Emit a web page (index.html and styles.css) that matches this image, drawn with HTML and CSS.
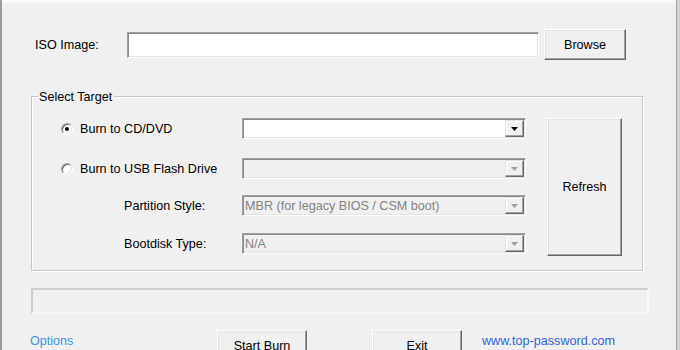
FILE: index.html
```html
<!DOCTYPE html>
<html>
<head>
<meta charset="utf-8">
<link rel="stylesheet" href="styles.css">
</head>
<body>
<div class="window">
  <div class="top-strip"></div>
  <div class="iso-row">
    <span class="iso-label">ISO Image:</span>
    <div class="textbox"></div>
    <button class="btn browse">Browse</button>
  </div>

  <div class="group">
    <span class="group-title">Select Target</span>
    <div class="group-grid">
      <label class="radio-row r1"><span class="radio checked"></span><span>Burn to CD/DVD</span></label>
      <div class="combo c1"><span class="combo-text"></span><span class="combo-btn"><svg width="7" height="4" viewBox="0 0 7 4"><polygon points="0,0 7,0 3.5,4" fill="#000"/></svg></span></div>
      <button class="btn refresh">Refresh</button>

      <label class="radio-row r2"><span class="radio"></span><span>Burn to USB Flash Drive</span></label>
      <div class="combo disabled c2"><span class="combo-text"></span><span class="combo-btn"><svg width="7" height="4" viewBox="0 0 7 4"><polygon points="0,0 7,0 3.5,4" fill="#a0a0a0"/></svg></span></div>

      <span class="sub-label r3">Partition Style:</span>
      <div class="combo disabled c3"><span class="combo-text">MBR (for legacy BIOS / CSM boot)</span><span class="combo-btn"><svg width="7" height="4" viewBox="0 0 7 4"><polygon points="0,0 7,0 3.5,4" fill="#a0a0a0"/></svg></span></div>

      <span class="sub-label r4">Bootdisk Type:</span>
      <div class="combo disabled c4"><span class="combo-text">N/A</span><span class="combo-btn"><svg width="7" height="4" viewBox="0 0 7 4"><polygon points="0,0 7,0 3.5,4" fill="#a0a0a0"/></svg></span></div>
    </div>
  </div>

  <div class="progress"></div>

  <div class="bottom-row">
    <a class="link options">Options</a>
    <button class="btn action start">Start Burn</button>
    <button class="btn action exit">Exit</button>
    <a class="link site">www.top-password.com</a>
  </div>
</div>
</body>
</html>
```

FILE: styles.css
```css
* { box-sizing: border-box; }
html, body {
  margin: 0;
  padding: 0;
  background: #d2d2d2;
  width: 680px;
  height: 350px;
  overflow: hidden;
}
.window {
  width: 677px;
  height: 350px;
  background: #f0f0f0;
  border-left: 2px solid #9c9c9c;
  border-right: 1px solid #a0a0a0;
  font-family: "Liberation Sans", Arial, sans-serif;
  font-size: 12.6px;
  color: #000;
}
.top-strip {
  height: 3px;
  background: #fafafa;
}

.btn {
  font-family: inherit;
  font-size: inherit;
  color: #000;
  background: #f0f0f0;
  border: 1px solid;
  border-color: #ffffff #696969 #696969 #ffffff;
  box-shadow: inset -1px -1px 0 #a0a0a0, inset 1px 1px 0 #e3e3e3;
  padding: 0;
  margin: 0;
}

/* ISO row */
.iso-row {
  display: flex;
  align-items: center;
  margin-top: 26px;
  margin-left: 33px;
  height: 31px;
}
.iso-label {
  width: 92px;
}
.textbox {
  width: 412px;
  height: 26px;
  margin-top: 1px;
  background: #fff;
  border: 1px solid;
  border-color: #a0a0a0 #ffffff #ffffff #a0a0a0;
  box-shadow: inset 1px 1px 0 #8a8a8a, inset -1px -1px 0 #e3e3e3;
  margin-right: 5px;
}
.browse {
  width: 82px;
  height: 31px;
}

/* Group box */
.group {
  position: relative;
  margin-top: 36px;
  margin-left: 29px;
  width: 612px;
  border: 1px solid #c6c6c6;
  box-shadow: inset 1px 1px 0 #ffffff, 1px 1px 0 #ffffff;
  padding: 21px 0 14px 0;
}
.group-title {
  position: absolute;
  left: 6px;
  top: -8px;
  padding: 0 2px 0 1px;
  background: #f0f0f0;
  line-height: 16px;
}
.group-grid {
  display: grid;
  grid-template-columns: 210px 284px 96px;
  grid-template-rows: 40px 37px 38px 23px;
}
.radio-row {
  display: flex;
  align-items: center;
  height: 21px;
  padding-left: 29px;
  padding-top: 1px;
}
.radio {
  width: 12px;
  height: 12px;
  border-radius: 50%;
  border: 1px solid;
  border-color: #a0a0a0 #ffffff #ffffff #a0a0a0;
  box-shadow: inset 1px 1px 0 #696969, inset -1px -1px 0 #e3e3e3;
  background: #fff;
  margin-right: 7px;
  display: flex;
  align-items: center;
  justify-content: center;
  flex: none;
}
.radio.checked::after {
  content: "";
  width: 4px;
  height: 4px;
  border-radius: 50%;
  background: #000;
}
.sub-label {
  display: flex;
  align-items: center;
  height: 21px;
  padding-left: 92px;
}
.r1, .c1 { grid-row: 1; }
.r2, .c2 { grid-row: 2; }
.r3, .c3 { grid-row: 3; }
.r4, .c4 { grid-row: 4; }
.r1, .r2, .r3, .r4 { grid-column: 1; }
.c1, .c2, .c3, .c4 { grid-column: 2; }

.combo {
  display: flex;
  align-items: stretch;
  height: 21px;
  background: #fff;
  border: 1px solid;
  border-color: #a0a0a0 #ffffff #ffffff #a0a0a0;
  box-shadow: inset 1px 1px 0 #8a8a8a, inset -1px -1px 0 #e3e3e3;
  padding: 1px;
}
.combo.disabled {
  background: #f0f0f0;
  color: #838383;
}
.combo-text {
  flex: 1;
  display: flex;
  align-items: center;
  padding-left: 1px;
  white-space: nowrap;
  overflow: hidden;
}
.combo-btn {
  width: 19px;
  background: #f0f0f0;
  border: 1px solid;
  border-color: #e3e3e3 #696969 #696969 #e3e3e3;
  box-shadow: inset -1px -1px 0 #a0a0a0, inset 1px 1px 0 #ffffff;
  display: flex;
  align-items: center;
  justify-content: center;
}
.refresh {
  grid-column: 3;
  grid-row: 1 / span 4;
  justify-self: end;
  width: 75px;
  height: 138px;
}

/* Progress */
.progress {
  margin-top: 17px;
  margin-left: 29px;
  width: 618px;
  height: 26px;
  border: 2px solid;
  border-color: #cfcfcf #f8f8f8 #f8f8f8 #cfcfcf;
}

/* Bottom row */
.bottom-row {
  display: flex;
  align-items: flex-start;
  margin-top: 16px;
  margin-left: 28px;
}
.link {
  line-height: 16px;
  margin-top: 3px;
  white-space: nowrap;
}
.options {
  color: #3a92e6;
  width: 187px;
}
.site {
  color: #3264d6;
  margin-left: 20px;
}
.action {
  width: 90px;
  height: 31px;
}
.exit {
  margin-left: 65px;
}
```
